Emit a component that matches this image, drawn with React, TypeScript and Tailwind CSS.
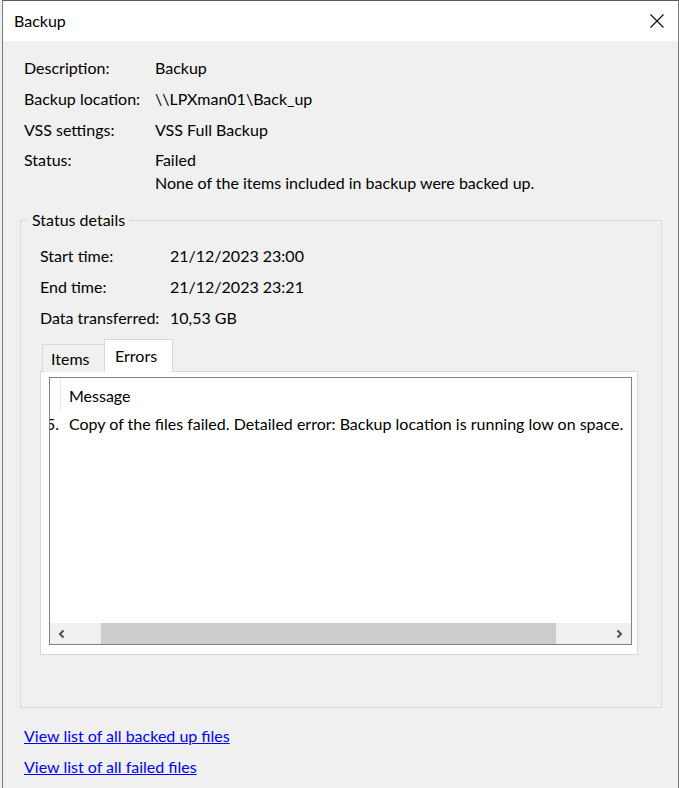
import React from "react";

const font = { fontFamily: '"Segoe UI", Lato, "Noto Sans", sans-serif' };

function Row({ label, value, w }: { label: string; value: string; w: string }) {
  return (
    <div className="flex h-[31px] items-center">
      <div className={w}>{label}</div>
      <div>{value}</div>
    </div>
  );
}

export default function App() {
  return (
    <div
      className="flex h-[788px] w-[679px] overflow-hidden bg-[#f0f0f0] pl-[2px] text-[16px] text-black"
      style={font}
    >
      <div className="flex flex-1 flex-col border border-b-0 border-[#7a7a7a] border-t-[#5a5a5a]">
        {/* title bar */}
        <div className="flex h-[40px] items-center justify-between bg-white pl-[11px] pr-[12px]">
          <span>Backup</span>
          <svg width="16" height="16" viewBox="0 0 16 16" className="mr-[1px]">
            <path d="M1.5 1.5 L14.5 14.5 M14.5 1.5 L1.5 14.5" stroke="#111" strokeWidth="1.2" />
          </svg>
        </div>

        {/* body */}
        <div className="flex flex-1 flex-col bg-[#f0f0f0] pl-[21px] pr-[16px] pt-[11px]">
          <Row label="Description:" value="Backup" w="w-[131px]" />
          <Row label="Backup location:" value="\\LPXman01\Back_up" w="w-[131px]" />
          <Row label="VSS settings:" value="VSS Full Backup" w="w-[131px]" />
          <div className="flex pt-[3px] leading-[23px]">
            <div className="w-[131px]">Status:</div>
            <div>
              <div>Failed</div>
              <div>None of the items included in backup were backed up.</div>
            </div>
          </div>

          <fieldset className="-ml-[4px] mt-[16px] h-[498px] border border-[#dcdcdc]">
            <legend className="ml-[7px] px-[4px] leading-[20px]">Status details</legend>
            <div className="pl-[19px] pt-[10px]">
              <Row label="Start time:" value="21/12/2023 23:00" w="w-[130px]" />
              <Row label="End time:" value="21/12/2023 23:21" w="w-[130px]" />
              <Row label="Data transferred:" value="10,53 GB" w="w-[130px]" />
            </div>

            {/* tabs */}
            <div className="ml-[19px] mr-[23px] mt-[6px]">
              <div className="relative z-10 flex items-end">
                <div className="ml-[2px] flex h-[28px] w-[63px] items-center border border-b-0 border-[#d9d9d9] bg-[#f0f0f0] pl-[8px] pt-[1px]">
                  Items
                </div>
                <div className="-ml-[1px] flex h-[33px] w-[69px] items-start border border-b-0 border-[#d9d9d9] bg-white pl-[10px] pt-[4px]">
                  Errors
                </div>
              </div>
              <div className="-mt-[1px] border border-[#d9d9d9] bg-white pb-[9px] pl-[8px] pr-[5px] pt-[5px]">
                <div className="flex h-[268px] flex-col overflow-hidden border border-[#828282] bg-white">
                  <div className="flex h-[36px] items-center">
                    <div className="ml-[10px] h-[32px] w-px self-start bg-[#e5e5e5]" />
                    <div className="ml-[8px]">Message</div>
                  </div>
                  <div className="flex h-[20px] items-center whitespace-nowrap">
                    <span className="-ml-[11px] w-[20px] shrink-0 text-right">5.</span>
                    <span className="ml-[10px]">
                      Copy of the files failed. Detailed error: Backup location is running low on space.
                    </span>
                  </div>
                  <div className="flex-1" />
                  {/* horizontal scrollbar */}
                  <div className="flex h-[21px] items-center bg-[#f0f0f0]">
                    <div className="flex w-[21px] justify-center pl-[3px]">
                      <svg width="10" height="10" viewBox="0 0 10 10">
                        <path d="M6.5 1.5 L3 5 L6.5 8.5" fill="none" stroke="#505050" strokeWidth="2" />
                      </svg>
                    </div>
                    <div className="ml-[30px] h-full w-[455px] bg-[#cdcdcd]" />
                    <div className="flex-1" />
                    <div className="mr-[2px] flex w-[21px] justify-center">
                      <svg width="10" height="10" viewBox="0 0 10 10">
                        <path d="M3.5 1.5 L7 5 L3.5 8.5" fill="none" stroke="#505050" strokeWidth="2" />
                      </svg>
                    </div>
                  </div>
                </div>
              </div>
            </div>
          </fieldset>

          <div className="mt-[12px] flex flex-col">
            <a href="#" className="h-[31px] leading-[31px] text-[#0000ff] underline">
              View list of all backed up files
            </a>
            <a href="#" className="h-[31px] leading-[31px] text-[#0000ff] underline">
              View list of all failed files
            </a>
          </div>
        </div>
      </div>
    </div>
  );
}
